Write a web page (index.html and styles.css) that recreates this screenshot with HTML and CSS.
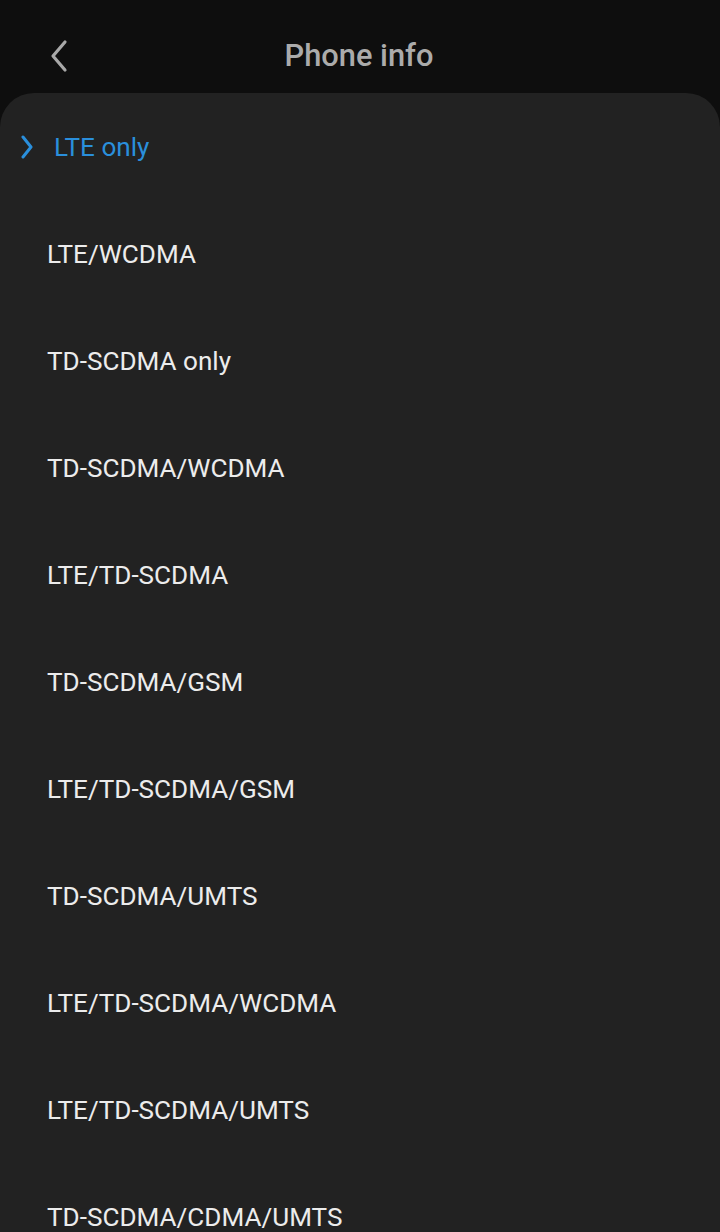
FILE: index.html
```html
<!DOCTYPE html>
<html lang="en">
<head>
    <meta charset="UTF-8">
    <meta name="viewport" content="width=device-width, initial-scale=1.0">
    <title>Phone info</title>
    <link rel="stylesheet" href="styles.css">
</head>
<body>
    <div class="header">
        <a class="back" href="#">
            <svg width="22" height="34" viewBox="0 0 22 34">
                <path d="M17 3 L5 17 L17 31" fill="none" stroke="#a8a8a8" stroke-width="3.2" stroke-linecap="round" stroke-linejoin="round"/>
            </svg>
        </a>
        <h1 class="title">Phone info</h1>
    </div>
    <ul class="list">
        <li class="item active">
            <svg class="mark" width="14" height="24" viewBox="0 0 14 24">
                <path d="M3 2 L11 12 L3 22" fill="none" stroke="#2a8fdc" stroke-width="3" stroke-linecap="round" stroke-linejoin="round"/>
            </svg>
            LTE only
        </li>
        <li class="item">LTE/WCDMA</li>
        <li class="item">TD-SCDMA only</li>
        <li class="item">TD-SCDMA/WCDMA</li>
        <li class="item">LTE/TD-SCDMA</li>
        <li class="item">TD-SCDMA/GSM</li>
        <li class="item">LTE/TD-SCDMA/GSM</li>
        <li class="item">TD-SCDMA/UMTS</li>
        <li class="item">LTE/TD-SCDMA/WCDMA</li>
        <li class="item">LTE/TD-SCDMA/UMTS</li>
        <li class="item">TD-SCDMA/CDMA/UMTS</li>
    </ul>
</body>
</html>
```

FILE: styles.css
```css
* {
    padding: 0;
    margin: 0;
    box-sizing: border-box;
}
html, body {
    height: 100%;
}
body {
    background: #0e0e0e;
    font-family: Roboto, "Liberation Sans", sans-serif;
    overflow: hidden;
}
.header {
    height: 93px;
    display: flex;
    align-items: center;
    justify-content: center;
    position: relative;
}
.back {
    position: absolute;
    left: 48px;
    top: 39px;
    display: block;
    line-height: 0;
}
.title {
    font-size: 30.8px;
    font-weight: 500;
    color: #ababab;
    margin-top: 18px;
    margin-left: -2px;
}
.list {
    list-style: none;
    background: #222222;
    border-radius: 34px 34px 0 0;
    min-height: 1200px;
}
.item {
    height: 107px;
    display: flex;
    align-items: center;
    padding-left: 47px;
    font-size: 26.1px;
    color: #ececec;
}
.item.active {
    padding-left: 20px;
    color: #2a8fdc;
}
.mark {
    margin-right: 20px;
}
```
